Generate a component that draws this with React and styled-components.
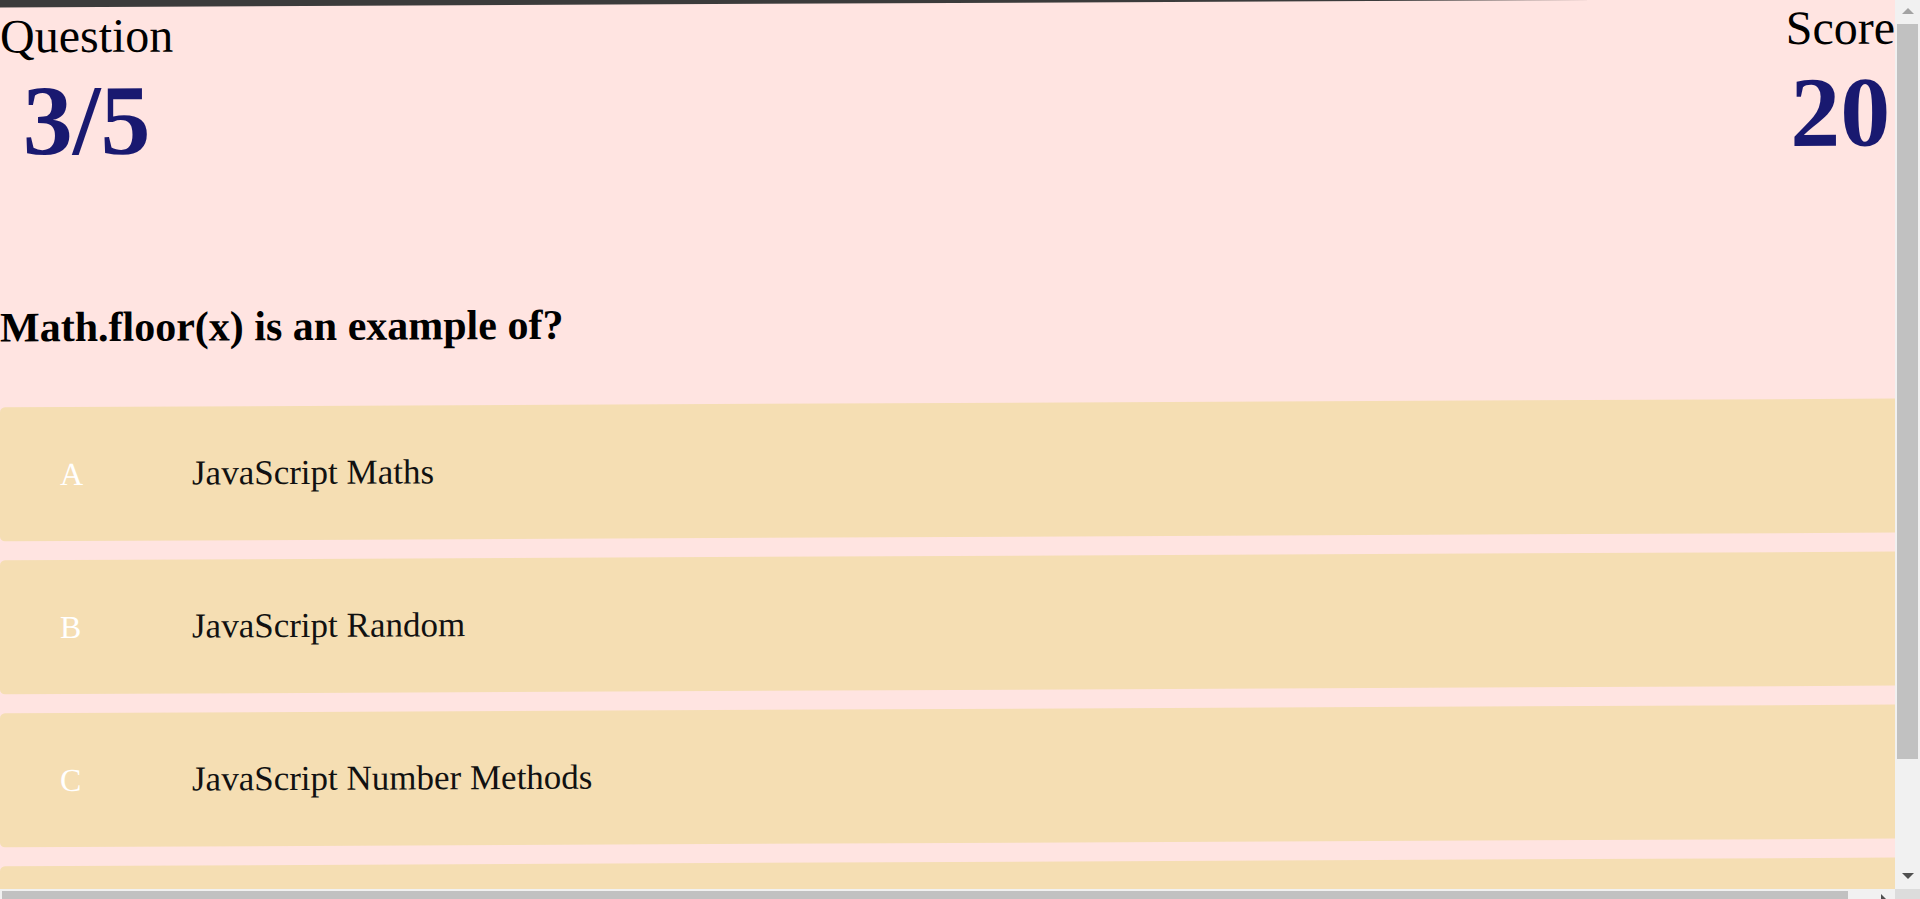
import React from "react";
import styled, { createGlobalStyle } from "styled-components";

const GlobalStyle = createGlobalStyle`
  html, body {
    margin: 0;
    height: 100%;
    overflow: hidden;
    background: #3b3b3b;
  }
  body {
    font-family: "Liberation Serif", "Times New Roman", serif;
    color: #000;
  }
  #root {
    height: 100%;
  }
`;

/* ---------- window frame with scrollbars ---------- */

const Frame = styled.div`
  display: grid;
  grid-template-columns: 1fr 25px;
  grid-template-rows: 1fr 10px;
  height: 100vh;
  overflow: hidden;
`;

const Viewport = styled.div`
  overflow: hidden;
  background: #3b3b3b;
  min-width: 0;
`;

const VScrollbar = styled.div`
  display: flex;
  flex-direction: column;
  background: #f1f1f1;
`;

const HScrollbar = styled.div`
  display: flex;
  background: #f1f1f1;
  overflow: hidden;
`;

const ScrollCorner = styled.div`
  background: #dcdcdc;
`;

const VButton = styled.div`
  flex: 0 0 22px;
  display: flex;
  align-items: center;
  justify-content: center;
  padding-bottom: ${(p) => (p.$down ? "4px" : "0")};
  box-sizing: border-box;
`;

const HButton = styled.div`
  flex: 0 0 22px;
  display: flex;
  align-items: flex-start;
  justify-content: center;
  padding-top: 5px;
  box-sizing: border-box;
`;

const VTrack = styled.div`
  flex: 1;
  padding: 2px;
`;

const VThumb = styled.div`
  height: ${(p) => p.$size}px;
  background: #c1c1c1;
`;

const HTrack = styled.div`
  flex: 1;
  padding: 2px 0 0 2px;
`;

const HThumb = styled.div`
  width: ${(p) => p.$size}px;
  height: 100%;
  background: #c1c1c1;
`;

const Arrow = ({ dir, color }) => {
  const pts = {
    up: "0,6 12,6 6,0",
    down: "0,0 12,0 6,6",
    right: "0,0 6,6 0,12",
  }[dir];
  const w = dir === "right" ? 6 : 12;
  const h = dir === "right" ? 12 : 6;
  return (
    <svg width={w} height={h} viewBox={`0 0 ${w} ${h}`} style={{ display: "block" }}>
      <polygon points={pts} fill={color} />
    </svg>
  );
};

/* ---------- quiz page ---------- */

const Page = styled.main`
  margin-top: 3px;
  padding-bottom: 16px;
  background: #ffe4e1;
  transform: skewY(-0.265deg);
  transform-origin: 50% 50%;
`;

const Header = styled.header`
  display: flex;
  justify-content: space-between;
  align-items: flex-start;
  padding-top: 1px;
`;

const Stat = styled.div`
  display: flex;
  flex-direction: column;
  align-items: center;
  text-align: center;
`;

const StatLabel = styled.div`
  font-size: 48px;
`;

const StatValue = styled.div`
  font-size: 100px;
  font-weight: 700;
  color: #191970;
`;

const QuestionText = styled.h2`
  margin: 125px 0 56px;
  font-size: 42px;
  font-weight: 700;
`;

const OptionList = styled.ul`
  list-style: none;
  margin: 0;
  padding: 0;
  width: 1920px;
  display: flex;
  flex-direction: column;
  gap: 19px;
`;

const Option = styled.li`
  display: flex;
  align-items: center;
  padding: 47px 60px;
  background: #f5deb3;
  border-radius: 5px;
  cursor: pointer;
`;

const OptionLetter = styled.span`
  flex: 0 0 132px;
  font-size: 32px;
  color: #ffffff;
`;

const OptionText = styled.span`
  font-size: 35px;
  color: #111;
`;

const options = [
  { letter: "A", text: "JavaScript Maths" },
  { letter: "B", text: "JavaScript Random" },
  { letter: "C", text: "JavaScript Number Methods" },
  { letter: "D", text: "None of these" },
];

export default function App() {
  return (
    <>
      <GlobalStyle />
      <Frame>
        <Viewport>
          <Page>
            <Header>
              <Stat>
                <StatLabel>Question</StatLabel>
                <StatValue>3/5</StatValue>
              </Stat>
              <Stat>
                <StatLabel>Score</StatLabel>
                <StatValue>20</StatValue>
              </Stat>
            </Header>
            <QuestionText>Math.floor(x) is an example of?</QuestionText>
            <OptionList>
              {options.map((o) => (
                <Option key={o.letter}>
                  <OptionLetter>{o.letter}</OptionLetter>
                  <OptionText>{o.text}</OptionText>
                </Option>
              ))}
            </OptionList>
          </Page>
        </Viewport>
        <VScrollbar>
          <VButton>
            <Arrow dir="up" color="#a3a3a3" />
          </VButton>
          <VTrack>
            <VThumb $size={735} />
          </VTrack>
          <VButton $down>
            <Arrow dir="down" color="#505050" />
          </VButton>
        </VScrollbar>
        <HScrollbar>
          <HTrack>
            <HThumb $size={1846} />
          </HTrack>
          <HButton>
            <Arrow dir="right" color="#505050" />
          </HButton>
        </HScrollbar>
        <ScrollCorner />
      </Frame>
    </>
  );
}
